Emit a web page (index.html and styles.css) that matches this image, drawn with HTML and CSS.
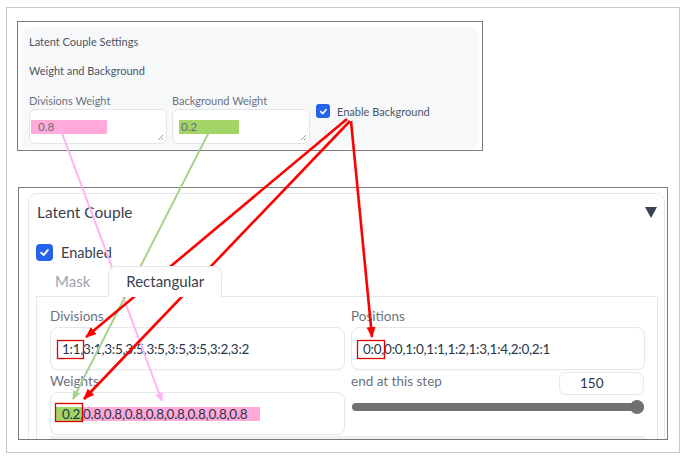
FILE: index.html
```html
<!DOCTYPE html>
<html>
<head>
<meta charset="utf-8">
<link rel="stylesheet" href="styles.css">
</head>
<body>
<div class="frame">
  <section class="top-panel">
    <div class="settings">
      <div class="s-title">Latent Couple Settings</div>
      <div class="s-sub">Weight and Background</div>
      <div class="s-row">
        <div class="field">
          <div class="flabel">Divisions Weight</div>
          <div class="tbox"><span class="hl hl-pink">0.8</span>
            <svg class="grip" width="7" height="7" viewBox="0 0 7 7"><path d="M6 1L1 6M6 4L4 6" stroke="#9a9a9a" stroke-width="1"/></svg>
          </div>
        </div>
        <div class="field">
          <div class="flabel">Background Weight</div>
          <div class="tbox tbox-g"><span class="hl hl-green">0.2</span>
            <svg class="grip" width="7" height="7" viewBox="0 0 7 7"><path d="M6 1L1 6M6 4L4 6" stroke="#9a9a9a" stroke-width="1"/></svg>
          </div>
        </div>
        <div class="chk">
          <span class="cb cb-sm"><svg width="9" height="9" viewBox="0 0 10 10"><path d="M2 5.2L4.2 7.3L8 2.8" fill="none" stroke="#fff" stroke-width="1.8" stroke-linecap="round" stroke-linejoin="round"/></svg></span>
          <span>Enable Background</span>
        </div>
      </div>
    </div>
  </section>

  <section class="bottom-panel">
    <div class="card">
      <div class="card-head">
        <span class="card-title">Latent Couple</span>
        <span class="tri"></span>
      </div>
      <div class="enabled">
        <span class="cb cb-lg"><svg width="11" height="11" viewBox="0 0 10 10"><path d="M2 5.2L4.2 7.3L8 2.8" fill="none" stroke="#fff" stroke-width="1.7" stroke-linecap="round" stroke-linejoin="round"/></svg></span>
        <span>Enabled</span>
      </div>
      <div class="tabs">
        <span class="tab">Mask</span>
        <span class="tab active">Rectangular</span>
      </div>
      <div class="tab-body">
        <div class="grid">
          <div class="col">
            <div class="lbl">Divisions</div>
            <div class="ibox"><span class="val">1:1,3:1,3:5,3:5,3:5,3:5,3:5,3:2,3:2</span></div>
            <div class="lbl lbl2">Weights</div>
            <div class="ibox ibox-w"><span class="val"><span class="w-green">0.2,</span><span class="w-pink">0.8,0.8,0.8,0.8,0.8,0.8,0.8,0.8</span></span></div>
          </div>
          <div class="col">
            <div class="lbl">Positions</div>
            <div class="ibox"><span class="val">0:0,0:0,1:0,1:1,1:2,1:3,1:4,2:0,2:1</span></div>
            <div class="end-row">
              <span class="lbl">end at this step</span>
              <span class="num">150</span>
            </div>
            <div class="slider"><span class="track"></span><span class="thumb"></span></div>
          </div>
        </div>
        <div class="strip"></div>
      </div>
    </div>
  </section>
</div>

<svg class="annot" width="688" height="459" viewBox="0 0 688 459">
  <defs>
    <marker id="mr" markerUnits="userSpaceOnUse" markerWidth="11" markerHeight="9" refX="10" refY="4.5" orient="auto">
      <path d="M0 0L11 4.5L0 9Z" fill="#ff0000"/>
    </marker>
    <marker id="mg" markerUnits="userSpaceOnUse" markerWidth="9" markerHeight="8" refX="8" refY="4" orient="auto">
      <path d="M0 0L9 4L0 8Z" fill="#a9d18e"/>
    </marker>
    <marker id="mp" markerUnits="userSpaceOnUse" markerWidth="9" markerHeight="8" refX="8" refY="4" orient="auto">
      <path d="M0 0L9 4L0 8Z" fill="#ffb4f2"/>
    </marker>
  </defs>
  <rect x="57.5" y="340.5" width="26" height="18" fill="none" stroke="#e00000" stroke-width="1.3"/>
  <rect x="55.5" y="403.5" width="27" height="18" fill="none" stroke="#e00000" stroke-width="1.3"/>
  <rect x="357.5" y="340.5" width="27" height="18" fill="none" stroke="#e00000" stroke-width="1.3"/>
  <line x1="60" y1="128" x2="162" y2="401" stroke="#ffb4f2" stroke-width="2" marker-end="url(#mp)"/>
  <line x1="210" y1="130" x2="73" y2="399" stroke="#a9d18e" stroke-width="2" marker-end="url(#mg)"/>
  <line x1="347" y1="119" x2="86" y2="337" stroke="#ff0000" stroke-width="2.6" marker-end="url(#mr)"/>
  <line x1="350" y1="121" x2="84" y2="399" stroke="#ff0000" stroke-width="2.6" marker-end="url(#mr)"/>
  <line x1="351" y1="121" x2="372" y2="337" stroke="#ff0000" stroke-width="2.6" marker-end="url(#mr)"/>
</svg>
</body>
</html>
```

FILE: styles.css
```css
* { box-sizing: border-box; }

body {
  margin: 0;
  padding: 7px 0 0 6px;
  width: 688px;
  height: 459px;
  position: relative;
  background: #fff;
  font-family: Lato, "Liberation Sans", sans-serif;
  overflow: hidden;
}

.frame {
  width: 674px;
  height: 446px;
  border: 1px solid #c8c8c8;
  overflow: hidden;
}

/* ---------- top panel ---------- */
.top-panel {
  margin: 13px 0 0 10px;
  width: 466px;
  height: 130px;
  border: 1px solid #7a7a7a;
  padding: 5px 4px 1px 4px;
}

.settings {
  height: 100%;
  background: #f7f8fa;
  border-radius: 8px;
  padding: 7px 0 0 7px;
  color: #4b5563;
  font-size: 11px;
}

.s-title, .s-sub { line-height: 16px; }
.s-sub { margin-top: 13px; }

.s-row {
  display: flex;
  gap: 5px;
  margin-top: 14px;
}

.field { width: 138px; }

.flabel {
  line-height: 16px;
  color: #6b7280;
}

.tbox {
  position: relative;
  height: 35px;
  background: #fff;
  border: 1px solid #e3e5e8;
  border-radius: 7px;
  padding: 10px 0 0 1px;
}

.tbox-g { padding-left: 6px; }

.grip {
  position: absolute;
  right: 2px;
  bottom: 2px;
}

.hl {
  display: inline-block;
  height: 14px;
  line-height: 14px;
  font-size: 11.5px;
  color: #6b6b78;
}

.hl-pink { width: 76px; padding-left: 7px; background: #ffaad8; }
.hl-green { width: 60px; padding-left: 2px; background: #a2d466; }

.chk {
  display: flex;
  align-items: center;
  gap: 7px;
  margin: 11px 0 0 1px;
  height: 14px;
  color: #4b5563;
}

.cb {
  display: inline-flex;
  align-items: center;
  justify-content: center;
  background: #2563eb;
  flex: none;
}

.cb-sm { width: 14px; height: 14px; border-radius: 3px; }
.cb-lg { width: 17px; height: 17px; border-radius: 4px; }

/* ---------- bottom panel ---------- */
.bottom-panel {
  margin: 36px 0 0 11px;
  width: 650px;
  height: 253px;
  border: 1px solid #7a7a7a;
  padding: 5px 2px 0 9px;
  overflow: hidden;
}

.card {
  height: 300px;
  border: 1px solid #e6e8eb;
  border-radius: 9px;
  padding: 0 6px 0 7px;
  color: #374151;
}

.card-head {
  display: flex;
  justify-content: space-between;
  align-items: center;
  padding: 8px 1px 0 1px;
  height: 28px;
}

.card-title {
  font-size: 15.5px;
  line-height: 20px;
}

.tri {
  width: 0;
  height: 0;
  border-left: 6.5px solid transparent;
  border-right: 6.5px solid transparent;
  border-top: 11px solid #374151;
}

.enabled {
  display: flex;
  align-items: center;
  gap: 8px;
  margin-top: 22px;
  height: 17px;
  font-size: 14.5px;
}

.tabs {
  display: flex;
  align-items: flex-end;
  height: 30px;
  margin-top: 5px;
}

.tab {
  padding: 0 17px;
  line-height: 29px;
  height: 30px;
  border: 1px solid transparent;
  border-bottom: none;
  border-radius: 8px 8px 0 0;
  font-size: 15px;
  color: #9ca3af;
}

.tab:first-child { padding-left: 18px; }

.tab.active {
  border-color: #e5e7eb;
  color: #374151;
  background: #fff;
  height: 31px;
  margin-bottom: -1px;
  position: relative;
  z-index: 1;
}

.tab-body {
  border: 1px solid #e5e7eb;
  padding: 9px 12px 0 13px;
  height: 200px;
}

.grid {
  display: grid;
  grid-template-columns: 295px 294px;
  column-gap: 6px;
}

.col {
  display: flex;
  flex-direction: column;
}

.lbl {
  line-height: 20px;
  font-size: 13.5px;
  color: #6b7280;
}

.lbl2 { margin-top: 1px; }

.ibox {
  margin-top: 1px;
  height: 43px;
  border: 1px solid #e5e7eb;
  border-radius: 8px;
  box-shadow: 0 1px 1px rgba(0,0,0,0.03);
  display: flex;
  align-items: center;
  padding-left: 11px;
  background: #fff;
}

.val {
  font-size: 13.5px;
  letter-spacing: -0.25px;
  color: #283548;
  white-space: nowrap;
}

.ibox-w { padding-left: 5px; }

.w-green, .w-pink {
  display: inline-block;
  height: 14px;
  line-height: 14px;
}

.w-green { background: #a2d466; padding-left: 6px; }
.w-pink { background: #ffaad8; padding-right: 13px; }

.end-row {
  display: flex;
  justify-content: space-between;
  align-items: flex-start;
  margin-top: 1px;
  height: 24px;
}

.num {
  margin: 1px 1px 0 0;
  width: 85px;
  height: 23px;
  border: 1px solid #e5e7eb;
  border-radius: 7px;
  padding-left: 20px;
  font-size: 13.5px;
  line-height: 21px;
  color: #283548;
}

.slider {
  position: relative;
  margin: 5px 1px 0 1px;
  height: 14px;
}

.track {
  position: absolute;
  left: 0;
  right: 0;
  top: 3px;
  height: 8px;
  border-radius: 4px;
  background: #707070;
}

.thumb {
  position: absolute;
  right: 0;
  top: 0;
  width: 14px;
  height: 14px;
  border-radius: 50%;
  background: #707070;
}

.strip {
  margin-top: 1px;
  height: 10px;
  background: #eef0f3;
}

/* ---------- annotations ---------- */
.annot {
  position: absolute;
  left: 0;
  top: 0;
  pointer-events: none;
}
```
